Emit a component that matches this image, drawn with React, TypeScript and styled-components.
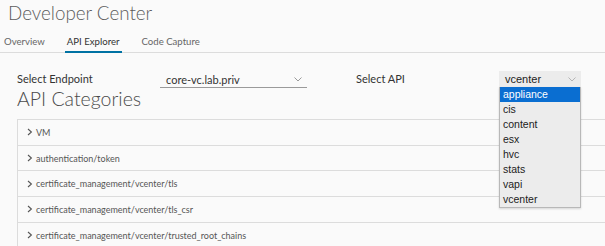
import React from "react";
import styled, { createGlobalStyle } from "styled-components";

const GlobalStyle = createGlobalStyle`
  html, body {
    margin: 0;
    padding: 0;
    background: #fafafa;
    font-family: Lato, "Open Sans", sans-serif;
    color: #565656;
    overflow: hidden;
  }
`;

const tabs = ["Overview", "API Explorer", "Code Capture"];
const apis = ["appliance", "cis", "content", "esx", "hvc", "stats", "vapi", "vcenter"];
const categories = [
  "VM",
  "authentication/token",
  "certificate_management/vcenter/tls",
  "certificate_management/vcenter/tls_csr",
  "certificate_management/vcenter/trusted_root_chains",
];

function Chevron({ color = "#9a9a9a" }: { color?: string }) {
  return (
    <svg width="8" height="5" viewBox="0 0 8 5">
      <path d="M0.5 0.5 L4 4 L7.5 0.5" fill="none" stroke={color} strokeWidth="1" />
    </svg>
  );
}

function Arrow() {
  return (
    <svg width="6" height="8" viewBox="0 0 6 8">
      <path d="M1 1 L4.4 4 L1 7" fill="none" stroke="#565656" strokeWidth="1.1" />
    </svg>
  );
}

function App() {
  return (
    <Page>
      <GlobalStyle />
      <Title>Developer Center</Title>

      <TabBar>
        {tabs.map((t) => (
          <Tab key={t} active={t === "API Explorer"}>
            {t}
          </Tab>
        ))}
      </TabBar>

      <Content>
        <FilterRow>
          <Label>Select Endpoint</Label>
          <LineSelect>
            <span>core-vc.lab.priv</span>
            <Chevron />
          </LineSelect>
          <Label className="api">Select API</Label>
          <BoxSelectWrap>
            <BoxSelect>
              <span>vcenter</span>
              <Chevron color="#b5b5b5" />
            </BoxSelect>
            <Menu>
              {apis.map((a, i) => (
                <MenuItem key={a} selected={i === 0}>
                  {a}
                </MenuItem>
              ))}
            </Menu>
          </BoxSelectWrap>
        </FilterRow>

        <Heading>API Categories</Heading>

        <Table>
          {categories.map((c) => (
            <Row key={c}>
              <Arrow />
              <span>{c}</span>
            </Row>
          ))}
        </Table>
      </Content>
    </Page>
  );
}

const Page = styled.div`
  width: 605px;
  height: 246px;
  overflow: hidden;
`;

const Title = styled.h1`
  margin: 0;
  padding: 1px 0 0 8px;
  height: 33px;
  box-sizing: border-box;
  font-size: 18.8px;
  font-weight: 300;
  color: #5c5c5c;
`;

const TabBar = styled.div`
  display: flex;
  gap: 22px;
  padding-left: 4px;
  height: 19px;
  border-bottom: 1px solid #dcdcdc;
`;

const Tab = styled.div<{ active?: boolean }>`
  font-size: 9.6px;
  line-height: 18px;
  padding: 0 2px;
  margin: 0 -2px;
  color: ${(p) => (p.active ? "#333" : "#666")};
  border-bottom: 2px solid ${(p) => (p.active ? "#0072a3" : "transparent")};
  margin-bottom: -1px;
`;

const Content = styled.div`
  padding-left: 17px;
`;

const FilterRow = styled.div`
  display: flex;
  align-items: flex-end;
  margin-top: 18px;
  height: 16px;
  font-size: 11px;
  color: #333;
`;

const Label = styled.div`
  width: 143px;
  line-height: 14px;
  padding-bottom: 1px;

  &.api {
    margin-left: 49px;
  }
`;

const LineSelect = styled.div`
  width: 147px;
  box-sizing: border-box;
  display: flex;
  align-items: center;
  justify-content: space-between;
  padding: 0 5px 0 6px;
  height: 16px;
  border-bottom: 1px solid #9a9a9a;
  margin-bottom: -1px;
`;

const BoxSelectWrap = styled.div`
  position: relative;
  width: 82px;
`;

const BoxSelect = styled.div`
  display: flex;
  align-items: center;
  justify-content: space-between;
  height: 16px;
  padding: 0 5px 0 6px;
  background: #ececec;
  font-family: "Liberation Sans", Arial, sans-serif;
  font-size: 11px;
  color: #222;
`;

const Menu = styled.div`
  position: absolute;
  top: 16px;
  left: 0;
  width: 82px;
  box-sizing: border-box;
  background: #ececec;
  border: 1px solid #b8b8b8;
  border-top: none;
  box-shadow: 0 1px 2px rgba(0, 0, 0, 0.15);
  z-index: 2;
`;

const MenuItem = styled.div<{ selected?: boolean }>`
  height: 15px;
  line-height: 15px;
  padding-left: 3px;
  font-family: "Liberation Sans", Arial, sans-serif;
  font-size: 10.5px;
  color: ${(p) => (p.selected ? "#fff" : "#222")};
  background: ${(p) => (p.selected ? "#0a6ed1" : "transparent")};
`;

const Heading = styled.h2`
  margin: 0;
  padding-top: 2px;
  font-size: 19.5px;
  font-weight: 300;
  color: #4a4a4a;
  line-height: 19px;
  height: 32px;
  box-sizing: border-box;
`;

const Table = styled.div`
  border-top: 1px solid #dcdcdc;
  border-left: 1px solid #dcdcdc;
`;

const Row = styled.div`
  display: flex;
  align-items: center;
  gap: 3px;
  height: 25.7px;
  box-sizing: border-box;
  padding-left: 9px;
  border-bottom: 1px solid #dcdcdc;
  font-size: 9px;
  color: #565656;
`;

export default App;
